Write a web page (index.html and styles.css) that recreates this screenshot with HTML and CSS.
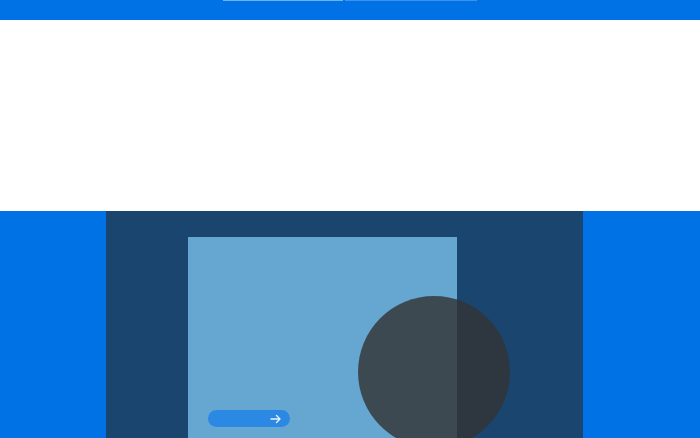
FILE: index.html
```html
<!DOCTYPE html>
<html lang="en">
<head>
<meta charset="utf-8">
<title>Page</title>
<link rel="stylesheet" href="styles.css">
</head>
<body>
<header class="topbar">
  <nav class="tabs">
    <span class="tab tab-a"></span>
    <span class="tab tab-b"></span>
  </nav>
</header>
<section class="blank"></section>
<section class="hero">
  <div class="panel">
    <div class="card">
      <a class="pill" href="#"><svg class="arrow" width="12" height="10" viewBox="0 0 12 10"><path d="M1 5h9M6.5 1.5L10 5 6.5 8.5" fill="none" stroke="#e8f2fc" stroke-width="1.4" stroke-linecap="round" stroke-linejoin="round"/></svg></a>
    </div>
    <div class="orb"></div>
  </div>
</section>
</body>
</html>
```
FILE: styles.css
```css
html, body {
  margin: 0;
  padding: 0;
  height: 100%;
  overflow: hidden;
  font-family: "Liberation Sans", Arial, sans-serif;
  background: #ffffff;
}
.topbar {
  height: 20px;
  background: #0072e6;
}
.tabs {
  display: flex;
  gap: 2px;
  padding-left: 223px;
}
.tab {
  display: block;
  height: 1px;
}
.tab-a {
  width: 120px;
  background: #6fb0f0;
}
.tab-b {
  width: 132px;
  background: #3f92ea;
}
.blank {
  height: 191px;
  background: #ffffff;
}
.hero {
  height: 227px;
  background: #0072e6;
  padding-left: 106px;
  overflow: hidden;
}
.panel {
  position: relative;
  width: 477px;
  height: 100%;
  background: #19456f;
  padding: 26px 0 0 82px;
  box-sizing: border-box;
}
.card {
  width: 269px;
  height: 100%;
  background: #65a7d0;
  padding-top: 173px;
  padding-left: 20px;
  box-sizing: border-box;
}
.pill {
  display: flex;
  align-items: center;
  justify-content: flex-end;
  width: 82px;
  height: 17px;
  border-radius: 9px;
  background: #2b89e3;
  padding-right: 8px;
  box-sizing: border-box;
}
.orb {
  position: absolute;
  left: 252px;
  top: 85px;
  width: 152px;
  height: 152px;
  border-radius: 50%;
  background: rgba(52, 52, 52, 0.81);
}
```
